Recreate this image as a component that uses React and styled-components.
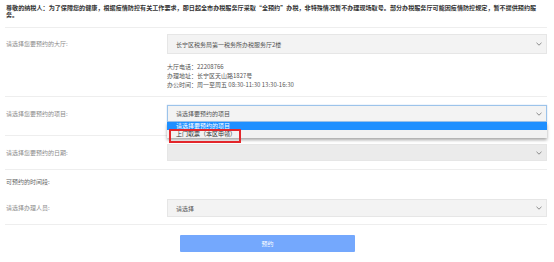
import styled, { createGlobalStyle } from "styled-components";

const GlobalStyle = createGlobalStyle`
  body {
    margin: 0;
    background: #ffffff;
    font-family: "Noto Sans CJK SC", "Noto Sans", sans-serif;
  }
`;

function Chevron() {
  return (
    <svg width="6" height="4" viewBox="0 0 6 4">
      <polyline points="0.5,0.8 3,3.2 5.5,0.8" fill="none" stroke="#8a8a8a" strokeWidth="1" />
    </svg>
  );
}

export default function App() {
  return (
    <Page>
      <GlobalStyle />
      <Notice>
        尊敬的纳税人：为了保障您的健康，根据疫情防控有关工作要求，即日起全市办税服务厅采取“全预约”办税，非特殊情况暂不办理现场取号。部分办税服务厅可能因疫情防控规定，暂不提供预约服务。
      </Notice>

      <Row $top={6} $bottom={7}>
        <Label $h={20}>请选择您要预约的大厅:</Label>
        <Field>
          <SelectBox $h={20}>
            <span>长宁区税务局第一税务所办税服务厅2楼</span>
            <Chevron />
          </SelectBox>
          <Info>
            <div>大厅电话：22208766</div>
            <div>办理地址：长宁区天山路1827号</div>
            <div>办公时间：周一至周五 08:30-11:30 13:30-16:30</div>
          </Info>
        </Field>
      </Row>

      <Row $top={8} $bottom={13}>
        <Label $h={17}>请选择您要预约的项目:</Label>
        <Field>
          <SelectBox $h={17} $focused>
            <span>请选择要预约的项目</span>
            <Chevron />
          </SelectBox>
          <Dropdown>
            <Option $active>请选择要预约的项目</Option>
            <Option>上门取票（本区申领）</Option>
            <Highlight />
          </Dropdown>
        </Field>
      </Row>

      <Row $top={8} $bottom={8}>
        <Label $h={17}>请选择您要预约的日期:</Label>
        <Field>
          <SelectBox $h={17} $disabled>
            <span />
            <Chevron />
          </SelectBox>
        </Field>
      </Row>

      <Section>
        <SubTitle>可预约的时间段:</SubTitle>
        <Row $top={0} $bottom={0} $plain>
          <Label $h={18}>请选择办理人员:</Label>
          <Field>
            <SelectBox $h={18}>
              <span>请选择</span>
              <Chevron />
            </SelectBox>
          </Field>
        </Row>
      </Section>

      <SubmitButton>预约</SubmitButton>
    </Page>
  );
}

const Page = styled.div`
  padding: 4px 7px 0 5px;
  width: 542px;
`;

const Notice = styled.p`
  margin: 0;
  padding: 0 0 9px 1px;
  width: 541px;
  font-size: 6.1px;
  line-height: 7px;
  font-weight: bold;
  color: #333333;
  border-bottom: 1px solid #eeeeee;
`;

const Row = styled.div`
  display: flex;
  align-items: flex-start;
  padding: ${(p) => p.$top}px 0 ${(p) => p.$bottom}px;
  border-bottom: ${(p) => (p.$plain ? "none" : "1px solid #eeeeee")};
`;

const Label = styled.div`
  width: 161px;
  flex-shrink: 0;
  padding-left: 1px;
  font-size: 6px;
  line-height: ${(p) => p.$h}px;
  color: #8c8c8c;
`;

const Field = styled.div`
  position: relative;
  flex: 1;
`;

const SelectBox = styled.div`
  box-sizing: border-box;
  height: ${(p) => p.$h}px;
  display: flex;
  align-items: center;
  justify-content: space-between;
  padding: 0 4px 0 8px;
  font-size: 6px;
  color: #555555;
  background: ${(p) => (p.$disabled ? "#ebebeb" : "#f3f3f3")};
  border: 1px solid ${(p) => (p.$focused ? "#9cc3ea" : "#e6e6e6")};
  box-shadow: ${(p) => (p.$focused ? "0 0 1px rgba(80,150,230,0.5)" : "none")};
`;

const Info = styled.div`
  margin-top: 8px;
  font-size: 6px;
  line-height: 9px;
  color: #555555;
`;

const Dropdown = styled.div`
  position: absolute;
  top: 100%;
  left: 0;
  right: 0;
  background: #f2f2f2;
  box-shadow: 0 2px 3px rgba(0, 0, 0, 0.35);
  z-index: 2;
`;

const Option = styled.div`
  height: 8px;
  padding-left: 9px;
  font-size: 6px;
  line-height: 8px;
  color: ${(p) => (p.$active ? "#ffffff" : "#333333")};
  background: ${(p) => (p.$active ? "#1e8fff" : "#f2f2f2")};
`;

const Highlight = styled.div`
  position: absolute;
  left: 2px;
  top: 7px;
  width: 72px;
  height: 14px;
  box-sizing: border-box;
  border: 2px solid #e3262b;
`;

const Section = styled.div`
  padding: 8px 0 7px;
  border-bottom: 1px solid #eeeeee;
`;

const SubTitle = styled.div`
  padding-left: 1px;
  margin-bottom: 13px;
  font-size: 6px;
  line-height: 8px;
  color: #666666;
`;

const SubmitButton = styled.button`
  display: block;
  margin: 10px 0 0 175px;
  width: 175px;
  height: 17px;
  padding: 0;
  border: none;
  border-radius: 1px;
  background: #74a8fd;
  color: #ffffff;
  font-family: "Noto Sans CJK SC", sans-serif;
  font-size: 6px;
`;
